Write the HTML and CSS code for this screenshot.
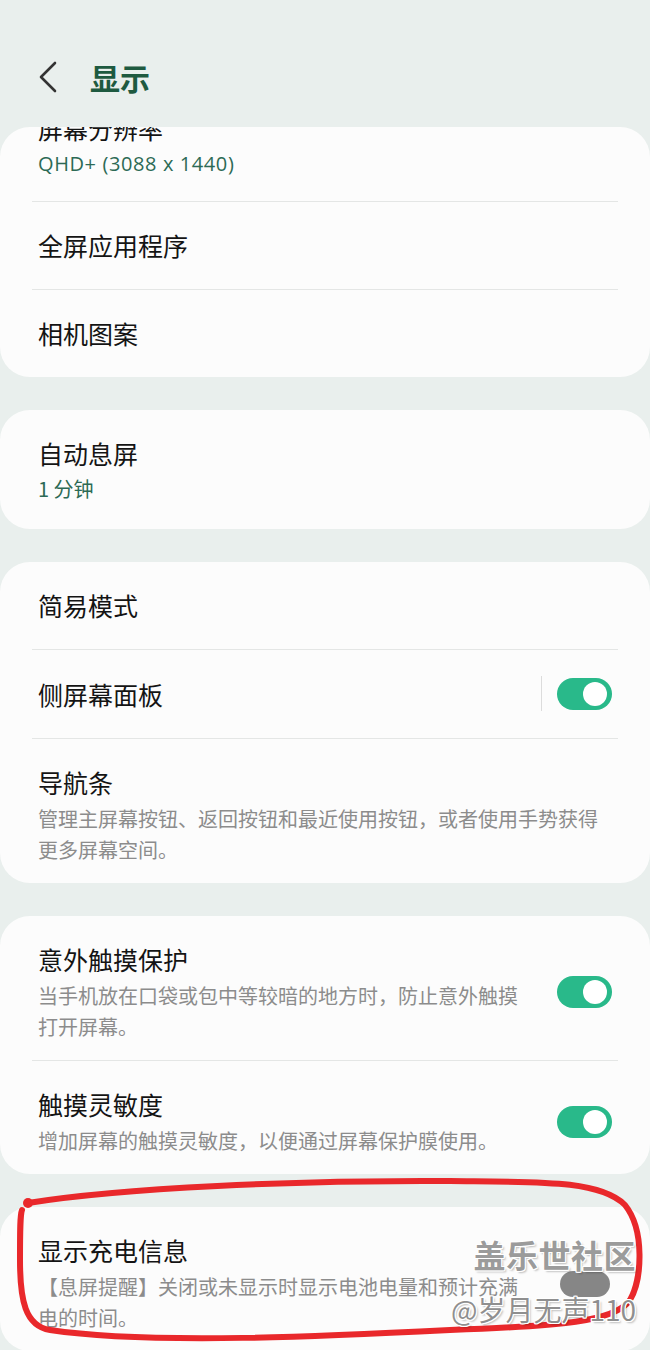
FILE: index.html
```html
<!DOCTYPE html>
<html lang="zh-CN">
<head>
  <meta charset="UTF-8">
  <title>显示</title>
  <link rel="stylesheet" href="styles.css">
</head>
<body>
  <div class="screen">
    <header class="topbar">
      <svg class="back" width="20" height="32" viewBox="0 0 20 32">
        <polyline points="17,2 3,16 17,30" fill="none" stroke="#333" stroke-width="2.6" stroke-linecap="round" stroke-linejoin="round"/>
      </svg>
      <h1>显示</h1>
    </header>

    <div class="list">
      <section class="card">
        <div class="row clipped">
          <div class="text">
            <div class="title">屏幕分辨率</div>
            <div class="value latin">QHD+ (3088 x 1440)</div>
          </div>
        </div>
        <div class="divider"></div>
        <div class="row single">
          <div class="text"><div class="title">全屏应用程序</div></div>
        </div>
        <div class="divider"></div>
        <div class="row single">
          <div class="text"><div class="title">相机图案</div></div>
        </div>
      </section>

      <section class="card">
        <div class="row roomy">
          <div class="text">
            <div class="title">自动息屏</div>
            <div class="value">1 分钟</div>
          </div>
        </div>
      </section>

      <section class="card">
        <div class="row single">
          <div class="text"><div class="title">简易模式</div></div>
        </div>
        <div class="divider"></div>
        <div class="row single">
          <div class="text"><div class="title">侧屏幕面板</div></div>
          <div class="vline"></div>
          <div class="toggle on"><span class="knob"></span></div>
        </div>
        <div class="divider"></div>
        <div class="row">
          <div class="text">
            <div class="title">导航条</div>
            <div class="desc">管理主屏幕按钮、返回按钮和最近使用按钮，或者使用手势获得更多屏幕空间。</div>
          </div>
        </div>
      </section>

      <section class="card">
        <div class="row">
          <div class="text">
            <div class="title">意外触摸保护</div>
            <div class="desc">当手机放在口袋或包中等较暗的地方时，防止意外触摸打开屏幕。</div>
          </div>
          <div class="toggle on"><span class="knob"></span></div>
        </div>
        <div class="divider"></div>
        <div class="row">
          <div class="text">
            <div class="title">触摸灵敏度</div>
            <div class="desc">增加屏幕的触摸灵敏度，以便通过屏幕保护膜使用。</div>
          </div>
          <div class="toggle on"><span class="knob"></span></div>
        </div>
      </section>

      <section class="card">
        <div class="row">
          <div class="text">
            <div class="title">显示充电信息</div>
            <div class="desc">【息屏提醒】关闭或未显示时显示电池电量和预计充满电的时间。</div>
          </div>
          <div class="toggle ghost"></div>
        </div>
      </section>
    </div>

    <!-- hand-drawn mark and watermark sit over the page -->
    <svg class="scribble" width="650" height="1350" viewBox="0 0 650 1350">
      <path d="M28 1203 C120 1188 300 1180 450 1181 C540 1182 600 1180 625 1205 C645 1230 642 1280 630 1300 C615 1322 560 1326 450 1330 C330 1336 150 1345 50 1330 C25 1326 20 1300 20 1260 C20 1230 20 1215 22 1210"
            fill="none" stroke="#e9282b" stroke-width="6" stroke-linecap="round" stroke-linejoin="round"/>
      <circle cx="28" cy="1203" r="5" fill="#e9282b"/>
    </svg>
    <div class="watermark">
      <div class="wm-logo">盖乐世社区</div>
      <div class="wm-user">@岁月无声110</div>
    </div>
  </div>
</body>
</html>
```

FILE: styles.css
```css
* {
  box-sizing: border-box;
}

body {
  margin: 0;
  background: #e9efed;
  font-family: "Noto Sans CJK SC", "Noto Sans", sans-serif;
}

.screen {
  position: relative;
  width: 650px;
  height: 1350px;
  overflow: hidden;
}

.topbar {
  height: 127px;
  display: flex;
  align-items: center;
  padding: 26px 0 0 38px;
}

.back {
  display: block;
  margin-right: 32px;
}

.topbar h1 {
  margin: 0;
  font-size: 30px;
  font-weight: 700;
  color: #1e5a40;
  line-height: 34px;
}

.list {
  display: flex;
  flex-direction: column;
  gap: 33px;
}

.card {
  background: #fcfcfc;
  border-radius: 30px;
  overflow: hidden;
}

.row {
  display: flex;
  align-items: center;
  padding: 26px 38px 18px 38px;
}

.row.single {
  padding: 26px 38px 27px 38px;
}

.row.clipped {
  margin-top: -43px;
  padding-top: 27px;
  padding-bottom: 21px;
}

.row.roomy {
  padding-top: 26px;
  padding-bottom: 24px;
}

.text {
  flex: 1;
  min-width: 0;
}

.title {
  font-size: 25px;
  line-height: 34px;
  color: #141414;
}

.value {
  margin-top: 3px;
  font-size: 20px;
  line-height: 32px;
  color: #2c6a55;
}

.value.latin {
  font-family: "Open Sans", "Noto Sans CJK SC", sans-serif;
  letter-spacing: 0.6px;
}

.desc {
  margin-top: 4px;
  font-size: 20px;
  line-height: 31px;
  color: #8c8c8c;
}

.divider {
  height: 1px;
  margin: 0 32px;
  background: #e4e6e5;
}

.vline {
  width: 1px;
  height: 35px;
  background: #dcdcdc;
  margin-right: 15px;
}

.toggle {
  position: relative;
  flex: none;
  width: 55px;
  height: 32px;
  border-radius: 16px;
  margin-left: 24px;
}

.vline + .toggle {
  margin-left: 0;
}

.toggle.on {
  background: #29b98a;
}

.toggle .knob {
  position: absolute;
  top: 4px;
  right: 5px;
  width: 24px;
  height: 24px;
  border-radius: 50%;
  background: #fff;
}

.toggle.ghost {
  align-self: flex-start;
  background: rgba(95, 95, 95, 0.75);
  width: 50px;
  height: 26px;
  border-radius: 13px;
  margin: 38px 2px 0 27px;
}

.scribble {
  position: absolute;
  left: 0;
  top: 0;
  pointer-events: none;
}

.watermark {
  position: absolute;
  right: 14px;
  top: 1234px;
  display: flex;
  flex-direction: column;
  align-items: flex-end;
  gap: 19px;
  color: #9b9b9b;
  text-shadow: 1px 0 #fff, -1px 0 #fff, 0 1px #fff, 0 -1px #fff,
    1px 1px #fff, -1px -1px #fff, 1px -1px #fff, -1px 1px #fff,
    2px 2px 2px rgba(0, 0, 0, 0.25);
}

.wm-logo {
  font-size: 32px;
  font-weight: 700;
  line-height: 40px;
  letter-spacing: 0.5px;
}

.wm-user {
  font-size: 28px;
  line-height: 32px;
  color: #8f8f8f;
}
```
